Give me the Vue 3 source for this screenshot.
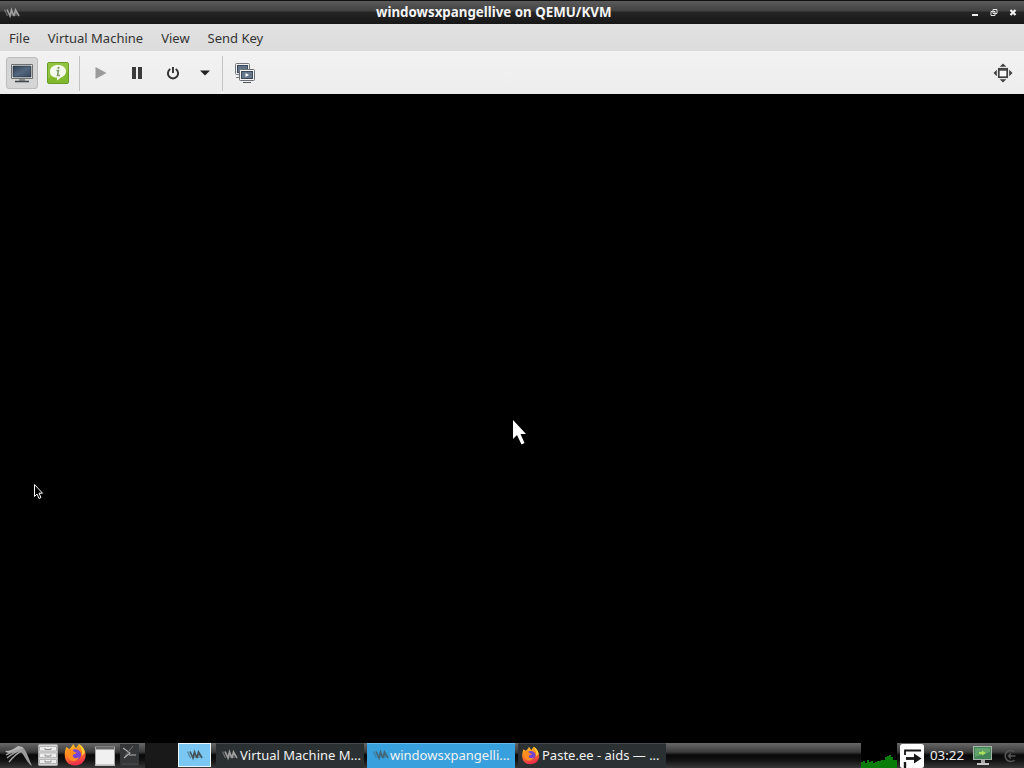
<script setup>
import { ref } from 'vue'

const title = ref('windowsxpangellive on QEMU/KVM')
const menus = ['File', 'Virtual Machine', 'View', 'Send Key']

const tasks = ref([
  { id: 1, label: 'Virtual Machine M...', icon: 'vm' },
  { id: 2, label: 'windowsxpangelli...', icon: 'vm' },
  { id: 3, label: 'Paste.ee - aids — ...', icon: 'firefox' }
])
const activeTask = ref(2)

// cpu load history, in pixels
const cpuLoad = [6, 7, 5, 8, 6, 7, 5, 6, 7, 7, 8, 8, 11, 12, 13, 11, 8, 8]
const clock = ref('03:22')
</script>

<template>
  <div class="desktop">
    <svg class="symbols" width="0" height="0">
      <defs>
        <linearGradient id="fire" x1="0" y1="0" x2="0.3" y2="1">
          <stop offset="0" stop-color="#ffd02c" />
          <stop offset="0.5" stop-color="#ff8420" />
          <stop offset="1" stop-color="#ee304b" />
        </linearGradient>
        <linearGradient id="screen" x1="0" y1="0" x2="1" y2="1">
          <stop offset="0" stop-color="#2f3e50" />
          <stop offset="0.5" stop-color="#53677f" />
          <stop offset="1" stop-color="#35475c" />
        </linearGradient>
      </defs>
      <symbol id="vm" viewBox="0 0 16 12">
        <path d="M0.500 2.500l3 6.500" fill="none" stroke="currentColor" stroke-width="1.300" opacity="0.500" />
        <path d="M3 2.500L6 9l1.500-6L10 9M10 9l1.500-6L15 9" fill="none" stroke="currentColor" stroke-width="1.700" opacity="0.900" />
        <path d="M8 5v4M12 5v4" fill="none" stroke="currentColor" stroke-width="1" opacity="0.600" />
      </symbol>
      <symbol id="firefox" viewBox="0 0 24 24">
        <path d="M2 8L3 4l3 2c2-1 3-3 4-5l3 4 3-4c2 1 4 3 5 5l1 2c3 8-2 15-10 15S0 17 2 8z" fill="url(#fire)" />
        <path d="M8 8c5-4 11 0 10 5-1 4-6 6-9 3-2-2-2-5-1-8z" fill="#7544d2" />
        <path d="M4 7c3-2 6 0 7 2l3 1c-2 2-5 1-4 4 1 2 4 2 6 0-1 5-8 6-11 1-1-2-2-5-1-8z" fill="#ff8d22" />
        <path d="M16 1c2 4 4 7 3 12l3-3c0-4-3-7-6-9z" fill="#ffce35" />
      </symbol>
    </svg>

    <header class="titlebar">
      <svg class="title-icon" width="16" height="12"><use href="#vm" /></svg>
      <span class="title">{{ title }}</span>
      <svg class="window-buttons" width="48" height="12" viewBox="0 0 48 12">
        <rect x="2" y="7" width="6" height="2" fill="#eee" />
        <path d="M23 2.500h4v4h-4zM21 4.500h4v4h-4z" fill="none" stroke="#e2e2e2" />
        <path d="M40.500 3l5 5M45.500 3l-5 5" stroke="#f2f2f2" stroke-width="2.200" />
      </svg>
    </header>

    <nav class="menubar">
      <span v-for="menu in menus" :key="menu" class="menu">{{ menu }}</span>
    </nav>

    <div class="toolbar">
      <button class="tool console">
        <svg width="24" height="22" viewBox="0 0 24 22">
          <path d="M1.500 2.500h21v14h-21z" fill="#f3f3f1" stroke="#6d7073" />
          <path d="M3 4h18v11H3z" fill="url(#screen)" stroke="#29343f" stroke-width="0.700" />
          <path d="M9 17h6v2H9z" fill="#8c8f90" />
          <path d="M5 19.500h14" stroke="#43474b" stroke-width="1.600" />
        </svg>
      </button>
      <button class="tool details">
        <svg width="22" height="22" viewBox="0 0 22 22">
          <rect x="0.500" y="0.500" width="21" height="21" rx="1.500" fill="#81b82e" stroke="#679d27" />
          <path d="M1 1h20v8L1 16z" fill="#9bcb4c" opacity="0.650" />
          <path d="M11 3c4.500 0 8 2.500 8 6.500 0 3-2 5-5 6l-4 3v-3c-4 0-7-2-7-6C3 5.500 6.500 3 11 3z" fill="#f5faed" />
          <path d="M9.500 8.500h2l-1 5H13" fill="none" stroke="#7d9368" stroke-width="1.500" />
          <circle cx="11.500" cy="5.800" r="1.100" fill="#7d9368" />
        </svg>
      </button>
      <i class="separator"></i>
      <button class="tool play">
        <svg width="12" height="14" viewBox="0 0 12 14"><path d="M0.500 1l11 6-11 6z" fill="#9b9b9b" /></svg>
      </button>
      <button class="tool pause">
        <svg width="12" height="14" viewBox="0 0 12 14"><path d="M1 1h4v12H1zM7 1h4v12H7z" fill="#3b3b3b" /></svg>
      </button>
      <button class="tool power">
        <svg width="14" height="14" viewBox="0 0 14 14">
          <path d="M4.300 3A5.100 5.100 0 1 0 9.700 3M7 1v6" fill="none" stroke="#303030" stroke-width="1.900" />
        </svg>
      </button>
      <button class="tool more">
        <svg width="10" height="6" viewBox="0 0 10 6"><path d="M0 0.500h10L5 5.500z" fill="#222" /></svg>
      </button>
      <i class="separator"></i>
      <button class="tool snapshots">
        <svg width="22" height="22" viewBox="0 0 22 22">
          <rect x="1.500" y="1.500" width="14" height="11" rx="1" fill="#eee" stroke="#74787d" />
          <rect x="3.500" y="3.500" width="10" height="7" fill="#617187" stroke="#39485a" />
          <path d="M2 15.500h4" stroke="#777" />
          <rect x="5.500" y="7.500" width="15" height="11" rx="1" fill="#f4f4f4" stroke="#6b7076" />
          <rect x="7.500" y="9.500" width="11" height="7" fill="#66778b" stroke="#3b4959" />
          <path d="M11.500 11l3.500 2-3.500 2z" fill="#fff" />
          <path d="M9 20.500h8" stroke="#555" />
        </svg>
      </button>
      <button class="tool fullscreen">
        <svg width="20" height="20" viewBox="0 0 20 20">
          <path d="M10 0.500l3.300 3.300H6.700zM10 19.500l3.300-3.300H6.700zM0.500 10l3.300-3.300v6.600zM19.500 10l-3.300-3.300v6.600z" fill="#404040" />
          <rect x="5.800" y="5.800" width="8.400" height="8.400" fill="#fafafa" stroke="#404040" stroke-width="1.700" />
          <path d="M6 7h8" stroke="#404040" stroke-width="1.500" />
        </svg>
      </button>
    </div>

    <main class="guest">
      <!-- guest cursor -->
      <svg class="cursor guest-cursor" width="16" height="28" viewBox="0 0 16 28">
        <path d="M1 1v19l4-4 4.500 9.500 3-1.500-4-9H14z" fill="#fff" />
      </svg>
      <!-- host cursor -->
      <svg class="cursor host-cursor" width="12" height="17" viewBox="0 0 12 17">
        <path d="M1.500 1.500v12l2.500-2.500 2 4.500 2-1-2-4.300h3.500z" fill="#000" stroke="#fff" stroke-width="1" />
      </svg>
    </main>

    <footer class="taskbar">
      <div class="launchers">
        <svg width="34" height="24" viewBox="0 0 34 24">
          <path d="M18 3c5 0 7 3 9 8l5 12c-5-3-7-10-11-14z" fill="#9a9a9a" />
          <path d="M5 8c5 0 9-2 13-5l6 2c-5 1-8 4-13 5-2 0-4 0-6-2z" fill="#b9b9b9" />
          <path d="M21 7c-5 1-9 4-14 8M22 8c-5 2-9 6-13 11M21 6c-5 1-10 3-15 6" fill="none" stroke="#a5a5a5" stroke-width="1.400" />
        </svg>
        <svg width="28" height="24" viewBox="0 0 28 24">
          <rect x="4.500" y="1.500" width="19" height="21" rx="1" fill="#d6d6d6" stroke="#a7a7a7" />
          <path d="M5.500 3.500h17v4.500h-17zM5.500 10h17v4.500h-17zM5.500 16.500h17v4h-17z" fill="#ededed" stroke="#aaa" stroke-width="0.800" />
          <path d="M11 5v1.500h6V5M11 11.500V13h6v-1.500M11 17.500V19h6v-1.500" fill="none" stroke="#888" />
        </svg>
        <svg width="28" height="24" viewBox="0 0 28 24"><use href="#firefox" x="1" width="24" height="23.500" /></svg>
        <svg width="30" height="24" viewBox="0 0 30 24">
          <rect x="5.500" y="4" width="19" height="18" fill="#f0f0f0" stroke="#aaa" />
          <path d="M6 4h18v2.500H6z" fill="#6a6a6a" />
          <path d="M5 22.500h20" stroke="#bbb" />
        </svg>
        <svg width="25" height="24" viewBox="0 0 25 24">
          <path d="M0 1h19v22H0z" fill="#343637" />
          <path d="M3 5l7 5-6 5M9 12h7" fill="none" stroke="#b0b0b0" stroke-width="1.100" />
          <path d="M13 3L5 13" fill="none" stroke="#777" />
          <path d="M2 21h16" stroke="#505050" />
        </svg>
      </div>
      <div class="pager">
        <i class="page"></i>
        <i class="page current"><svg width="16" height="12"><use href="#vm" /></svg></i>
      </div>
      <div class="tasks">
        <div
          v-for="task in tasks"
          :key="task.id"
          class="task"
          :class="{ active: task.id === activeTask }"
          @click="activeTask = task.id"
        >
          <svg v-if="task.icon === 'vm'" class="task-icon" width="16" height="12"><use href="#vm" /></svg>
          <svg v-else class="task-icon fox" width="19" height="19"><use href="#firefox" /></svg>
          <span>{{ task.label }}</span>
        </div>
      </div>
      <div class="tray">
        <div class="cpu">
          <i v-for="(load, i) in cpuLoad" :key="i" :style="{ height: load + 'px' }"></i>
        </div>
        <svg class="logout" width="25" height="25" viewBox="0 0 25 25">
          <rect x="0" y="1" width="24" height="24" rx="2.500" fill="#fff" />
          <path d="M5 12V7.500h16" fill="none" stroke="#171717" stroke-width="1.800" />
          <path d="M5 19v6" fill="none" stroke="#171717" stroke-width="2.400" />
          <path d="M6 15.500h9" stroke="#171717" stroke-width="2.800" />
          <path d="M14 10.500l7.500 5-7.500 5z" fill="#171717" />
        </svg>
        <span class="clock">{{ clock }}</span>
        <svg class="network" width="22" height="24" viewBox="0 0 22 24">
          <rect x="1.500" y="2.500" width="18" height="13" fill="#438458" stroke="#a6b5a9" />
          <path d="M3 4h15v4L3 13z" fill="#62a16b" />
          <path d="M7 8h3V6.500L14 9l-4 2.500V10H7z" fill="#a8e15b" />
          <path d="M9 16h4v3H9z" fill="#aaa" />
          <path d="M5 20h12" stroke="#c7c7c7" stroke-width="2" />
        </svg>
        <svg class="session" width="18" height="18" viewBox="0 0 18 18">
          <path d="M13.500 5A5.500 5.500 0 1 0 13.500 13M8 9h6.500M10 6.500L7.500 9l2.500 2.500" fill="none" stroke="#555" stroke-width="1.600" />
        </svg>
      </div>
    </footer>
  </div>
</template>

<style>
body {
  margin: 0;
  background: #000;
  overflow: hidden;
}
</style>

<style scoped>
.desktop {
  display: flex;
  flex-direction: column;
  width: 1024px;
  height: 768px;
  overflow: hidden;
  background: #000;
  font-family: "Noto Sans", "Open Sans", sans-serif;
  font-size: 13px;
}

.symbols {
  position: absolute;
}

.titlebar {
  display: grid;
  grid-template-columns: 376px 1fr 54px;
  align-items: center;
  height: 24px;
  flex: none;
  box-sizing: border-box;
  border-top: 1px solid #111;
  background: linear-gradient(#5b5b5b 0, #414141 10px, #252525 11px, #171717 100%);
  color: #f4f4f4;
}

.title-icon {
  margin-left: 4px;
  color: #aaa;
}

.title {
  font-weight: bold;
  font-size: 13.33px;
  line-height: 23px;
  white-space: nowrap;
}

.menubar {
  display: flex;
  gap: 18px;
  height: 27px;
  flex: none;
  padding-left: 9px;
  background: linear-gradient(#e1e1e1, #dcdcdc);
  color: #333;
  line-height: 28px;
}

.toolbar {
  display: flex;
  align-items: center;
  height: 43px;
  flex: none;
  box-sizing: border-box;
  padding: 1px 5px 0 6px;
  background: linear-gradient(#f2f2f2, #ededed);
}

.tool {
  display: flex;
  align-items: center;
  justify-content: center;
  width: 36px;
  height: 32px;
  padding: 0;
  border: 0;
  background: none;
}

.console {
  width: 32px;
  box-sizing: border-box;
  border: 1px solid #bcbcbc;
  border-radius: 3px;
  background: #d5d5d5;
}

.details {
  width: 40px;
}

.separator {
  width: 1px;
  height: 35px;
  margin: 0 3px 0 1px;
  background: #c4c4c4;
}

.more {
  width: 28px;
  margin-right: 2px;
}

.snapshots {
  width: 38px;
}

.fullscreen {
  width: 32px;
  margin-left: auto;
}

.guest {
  position: relative;
  flex: 1;
  background: #000;
}

.cursor {
  position: absolute;
}

.guest-cursor {
  left: 512px;
  top: 325px;
}

.host-cursor {
  left: 33px;
  top: 389px;
}

.taskbar {
  display: flex;
  height: 25px;
  flex: none;
  background: linear-gradient(#686868 0, #3b3b3b 9px, #080808 12px, #111 17px, #383838 25px);
  color: #f1f1f1;
}

.launchers {
  display: flex;
  width: 145px;
}

.pager {
  display: flex;
  width: 71px;
}

.page {
  width: 33px;
  background: #191919;
}

.page.current {
  display: flex;
  align-items: center;
  justify-content: center;
  box-sizing: border-box;
  height: 24px;
  border: 1px solid #eaf7ff;
  background: #79c7f2;
  color: #3f474b;
}

.tasks {
  display: flex;
  gap: 3px;
}

.task {
  display: flex;
  align-items: center;
  width: 148px;
  box-sizing: border-box;
  padding: 0 0 2px 6px;
  background: #2b3033;
  border-top: 1px solid #444a4d;
  white-space: nowrap;
  overflow: hidden;
}

.task.active {
  background: #38a0dc;
  border-top-color: #66b9e6;
}

.task-icon {
  flex: none;
  margin-right: 2px;
  color: #aaa;
}

.task.active .task-icon {
  margin-right: 1px;
  color: #46606e;
}

.task-icon.fox {
  margin: 0 2px 0 -3px;
}

.tray {
  display: flex;
  align-items: center;
  margin-left: auto;
}

.cpu {
  display: flex;
  align-items: flex-end;
  width: 36px;
  height: 25px;
  background: #000;
}

.cpu i {
  width: 2px;
  background: #087d08;
}

.logout {
  margin-left: 3px;
}

.clock {
  width: 36px;
  margin-left: 5px;
  padding-bottom: 1px;
  font-size: 13.33px;
}

.network {
  margin-left: 6px;
}

.session {
  margin: 0 5px 0 7px;
}
</style>
